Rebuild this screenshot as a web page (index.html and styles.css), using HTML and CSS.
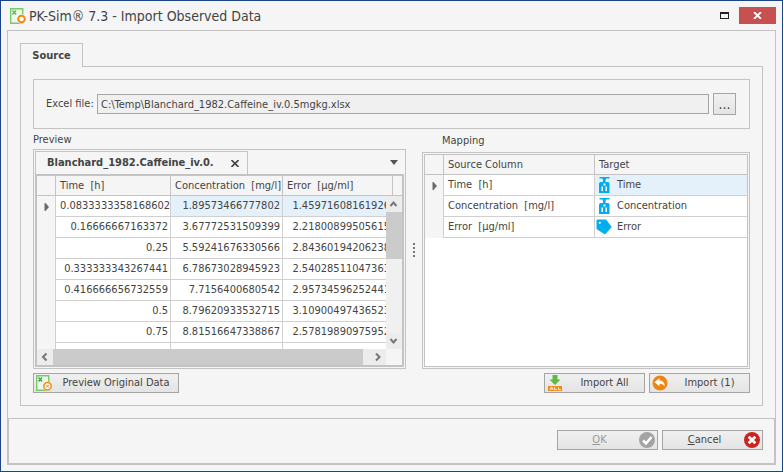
FILE: index.html
```
<!DOCTYPE html>
<html lang="en">
<head>
<meta charset="utf-8">
<title>PK-Sim® 7.3 - Import Observed Data</title>
<link rel="stylesheet" href="styles.css">
</head>
<body>
<svg class="defs" width="0" height="0" aria-hidden="true">
  <symbol id="bottle" viewBox="0 0 16 16">
    <path fill="#00adef" d="M3.500 0h10v1.500H10L9.500 3.500V5H12.500L13.500 6.500V16H3V6.500L4 5H7V3.500L6.500 1.500h-3z"/>
    <path fill="#fff" d="M7.500 6.500h2v2h-2zM5.500 9.500H7V14H5.500zM9.500 9.500H11V14H9.500z"/>
  </symbol>
  <symbol id="tag" viewBox="0 0 16 16">
    <path fill="#00adef" d="M1.500 .5H10L15.800 8 9 15.500 .5 10V1.500z"/>
    <circle cx="3.800" cy="3.800" r="1.100" fill="#fff"/>
  </symbol>
  <symbol id="row-arrow" viewBox="0 0 5 8"><path fill="#6a6a6a" d="M.5 0h1L5 4 1.500 8h-1z"/></symbol>
</svg>
<div class="window">
  <header class="titlebar">
    <svg class="app-icon" width="16" height="16" viewBox="0 0 16 16" aria-hidden="true">
      <path d="M.7.700h12v14.600H.7z" fill="#eef8ec" stroke="#7ac86c" stroke-width="1.400"/>
      <path d="M2.500 2.500l3.500 4M6 2.500L2.500 6.500" stroke="#5cb85a" stroke-width="1.400"/>
      <circle cx="11.500" cy="11" r="4.800" fill="#f5f5f5"/>
      <circle cx="11.500" cy="11" r="3.300" fill="#fff" stroke="#f58a0b" stroke-width="2"/>
    </svg>
    <h1>PK-Sim® 7.3 - Import Observed Data</h1>
    <button class="win-btn" type="button" aria-label="Maximize">
      <svg width="9" height="7" viewBox="0 0 9 7"><path fill="#222" fill-rule="evenodd" d="M0 0h9v7H0zM1 2v4h7V2z"/></svg>
    </button>
    <button class="win-btn close" type="button" aria-label="Close">
      <svg width="9" height="7" viewBox="0 0 9 7"><path d="M1 0l7 7M8 0L1 7" stroke="#fff" stroke-width="1.800"/></svg>
    </button>
  </header>

  <main class="client">
    <div class="source-tab">Source</div>
    <section class="page">
      <div class="file-group">
        <label for="file">Excel file:</label>
        <input id="file" type="text" readonly value="C:\Temp\Blanchard_1982.Caffeine_iv.0.5mgkg.xlsx">
        <button class="btn browse" type="button">...</button>
      </div>

      <div class="panes">
        <section class="pane preview">
          <h2>Preview</h2>
          <div class="frame">
            <div class="sheet-tabs">
              <div class="sheet-tab"><span>Blanchard_1982.Caffeine_iv.0.</span>
                <button class="plain" type="button" aria-label="Close sheet"><svg width="8" height="7" viewBox="0 0 8 7"><path d="M.5 0l7 7M7.500 0l-7 7" stroke="#444" stroke-width="1.600"/></svg></button>
              </div>
              <button class="plain drop" type="button" aria-label="Sheets"><svg width="8" height="5" viewBox="0 0 8 5"><path fill="#555" d="M0 0h8L4 5z"/></svg></button>
            </div>
            <div class="sheet">
              <div class="grid-view">
                <table class="grid">
                  <colgroup><col class="c-ind"><col class="c-time"><col class="c-conc"><col class="c-err"><col></colgroup>
                  <thead><tr><th></th><th>Time&nbsp; [h]</th><th>Concentration&nbsp; [mg/l]</th><th>Error&nbsp; [µg/ml]</th><th></th></tr></thead>
                  <tbody>
                    <tr class="focused"><td class="ind"><svg width="5" height="8"><use href="#row-arrow"/></svg></td><td class="current">0.0833333358168602</td><td>1.89573466777802</td><td>1.45971608161926</td><td></td></tr>
                    <tr><td class="ind"></td><td>0.16666667163372</td><td>3.67772531509399</td><td>2.21800899505615</td><td></td></tr>
                    <tr><td class="ind"></td><td>0.25</td><td>5.59241676330566</td><td>2.84360194206238</td><td></td></tr>
                    <tr><td class="ind"></td><td>0.333333343267441</td><td>6.78673028945923</td><td>2.54028511047363</td><td></td></tr>
                    <tr><td class="ind"></td><td>0.416666656732559</td><td>7.7156400680542</td><td>2.95734596252441</td><td></td></tr>
                    <tr><td class="ind"></td><td>0.5</td><td>8.79620933532715</td><td>3.10900497436523</td><td></td></tr>
                    <tr><td class="ind"></td><td>0.75</td><td>8.81516647338867</td><td>2.57819890975952</td><td></td></tr>
                    <tr><td class="ind"></td><td></td><td></td><td></td><td></td></tr>
                  </tbody>
                </table>
                <div class="vscroll">
                  <svg width="15" height="16"><path d="M4.500 10l3-3.500 3 3.500" fill="none" stroke="#777" stroke-width="2"/></svg>
                  <div class="thumb"></div>
                  <svg width="15" height="16"><path d="M4.500 6l3 3.500 3-3.500" fill="none" stroke="#777" stroke-width="2"/></svg>
                </div>
              </div>
              <div class="hscroll">
                <svg width="16" height="16"><path d="M9.500 4.500L6 8l3.500 3.500" fill="none" stroke="#777" stroke-width="2"/></svg>
                <div class="thumb"></div>
                <svg width="23" height="16"><path d="M13 4.500L16.500 8 13 11.500" fill="none" stroke="#777" stroke-width="2"/></svg>
              </div>
            </div>
          </div>
        </section>

        <div class="splitter"><i></i><i></i><i></i><i></i></div>

        <section class="pane mapping">
          <h2>Mapping</h2>
          <div class="frame">
            <div class="map-body">
              <table class="grid">
                <colgroup><col class="m-ind"><col class="m-src"><col></colgroup>
                <thead><tr><th></th><th>Source Column</th><th>Target</th></tr></thead>
                <tbody>
                  <tr><td class="ind"><svg width="5" height="8"><use href="#row-arrow"/></svg></td><td>Time&nbsp; [h]</td><td class="target selected"><div><svg width="16" height="16"><use href="#bottle"/></svg>Time</div></td></tr>
                  <tr><td class="ind"></td><td>Concentration&nbsp; [mg/l]</td><td class="target"><div><svg width="16" height="16"><use href="#bottle"/></svg>Concentration</div></td></tr>
                  <tr><td class="ind"></td><td>Error&nbsp; [µg/ml]</td><td class="target"><div><svg width="16" height="16"><use href="#tag"/></svg>Error</div></td></tr>
                </tbody>
              </table>
            </div>
          </div>
        </section>
      </div>

      <div class="actions">
        <button class="btn original" type="button">
          <svg width="16" height="16" viewBox="0 0 16 16" aria-hidden="true">
            <path d="M.7.700h12v14.600H.7z" fill="#eef8ec" stroke="#7ac86c" stroke-width="1.400"/>
            <path d="M2.500 2.500l3.500 4M6 2.500L2.500 6.500" stroke="#3fa447" stroke-width="1.400"/>
            <circle cx="11.500" cy="11.200" r="4.700" fill="#f0f0f0"/>
            <circle cx="11.500" cy="11.200" r="3.700" fill="#fff" stroke="#f58a0b" stroke-width="1.500"/>
            <path d="M10 9.700l3 3M13 9.700l-3 3" stroke="#f58a0b"/>
          </svg><span>Preview Original Data</span></button>
        <button class="btn wide push" type="button">
          <svg width="16" height="16" viewBox="0 0 16 16" aria-hidden="true">
            <path fill="#5fb946" d="M5.500 0h5v4.500h3L8 10 2.500 4.500h3z"/>
            <path fill="#f08a1c" d="M1 11h14v5H1z"/>
            <path fill="none" stroke="#fff" stroke-width=".8" d="M3 15l1.200-3h.6L6 15M3.500 14h2M7.500 12v2.600H10M11.500 12v2.600H14"/>
          </svg><span>Import All</span></button>
        <button class="btn wide" type="button">
          <svg width="16" height="16" viewBox="0 0 16 16" aria-hidden="true">
            <circle cx="8" cy="8" r="7.500" fill="#f08411"/>
            <path fill="#fff" d="M2.500 7.200L7.500 3v2.500c3.500 0 5.500 2.500 5 6-1-2-2.500-2.800-5-2.700v2.500z"/>
          </svg><span>Import (1)</span></button>
      </div>
    </section>
  </main>

  <footer class="footer">
    <button class="btn wide" type="button" disabled><span><u>O</u>K</span>
      <svg width="16" height="16" viewBox="0 0 16 16" aria-hidden="true"><circle cx="8" cy="8" r="8" fill="#a3a3a3"/><path d="M4 8.500l3 3 5.500-6.500" fill="none" stroke="#fff" stroke-width="2.500"/></svg></button>
    <button class="btn wide" type="button"><span><u>C</u>ancel</span>
      <svg width="16" height="16" viewBox="0 0 16 16" aria-hidden="true"><circle cx="8" cy="8" r="8" fill="#c9241f"/><path d="M4.700 4.700l6.600 6.600M11.300 4.700l-6.600 6.600" stroke="#fff" stroke-width="2.800"/></svg></button>
  </footer>
</div>
</body>
</html>
```
FILE: styles.css
```
* { box-sizing: border-box; }
body {
  margin: 0;
  color: #444;
  font: 11px/14px "DejaVu Sans Condensed", "DejaVu Sans", sans-serif;
}
svg { display: block; flex: none; }
.defs { position: absolute; }
h1, h2 { margin: 0; font-weight: normal; }
button, input { font: inherit; color: inherit; margin: 0; border-radius: 0; }

.window {
  display: flex;
  flex-direction: column;
  min-height: 100vh;
  padding: 0 6px 6px;
  border: 1px solid #1c4587;
  background: #f5f5f5;
}
.titlebar { display: flex; align-items: center; height: 29px; padding-left: 3px; }
.titlebar h1 { flex: 1; margin-left: 3px; font-size: 14px; line-height: 18px; }
.win-btn {
  display: flex;
  align-items: center;
  justify-content: center;
  width: 30px;
  height: 17px;
  padding: 0;
  border: 0;
  background: none;
}
.win-btn.close { width: 37px; background: #c75050; }

.client {
  flex: 1;
  display: flex;
  flex-direction: column;
  padding: 12px;
  border: 1px solid #c3c3c3;
  border-bottom: 0;
}
.source-tab {
  align-self: flex-start;
  width: 63px;
  height: 24px;
  margin-bottom: -1px;
  padding-top: 5px;
  border: 1px solid #c3c3c3;
  border-bottom: 0;
  background: #f5f5f5;
  font-weight: bold;
  text-align: center;
  z-index: 1;
}
.page {
  flex: 1;
  display: flex;
  flex-direction: column;
  padding: 12px;
  border: 1px solid #c3c3c3;
}
.file-group {
  display: flex;
  align-items: center;
  height: 50px;
  padding: 0 13px 0 12px;
  border: 1px solid #c3c3c3;
}
.file-group label { width: 51px; white-space: nowrap; }
.file-group input {
  flex: 1;
  min-width: 0;
  height: 20px;
  padding: 0 3px;
  border: 1px solid #a5a5a5;
  background: #f0f0f0;
  outline: 0;
}
.btn {
  display: flex;
  align-items: center;
  height: 20px;
  padding: 0 2px;
  border: 1px solid #a5a5a5;
  background: linear-gradient(#f0f0f0, #e4e4e4);
  white-space: nowrap;
}
.btn span { flex: 1; text-align: center; }
.btn svg + span { padding-left: 4px; }
.btn:disabled { color: #999; }
.browse { justify-content: center; width: 23px; height: 22px; margin-left: 4px; font-size: 14px; }

.panes { flex: 1; display: flex; }
.pane { display: flex; flex-direction: column; min-width: 0; }
.preview { flex: 373; }
.mapping { flex: 328; }
.pane h2 { height: 20px; padding-top: 4px; font-size: 11px; line-height: 14px; }
.mapping h2 { height: 23px; padding: 5px 0 0 20px; }
.frame {
  flex: 1;
  display: flex;
  flex-direction: column;
  padding: 1px;
  border: 1px solid #c3c3c3;
}
.sheet-tabs { display: flex; align-items: center; justify-content: space-between; height: 23px; }
.sheet-tab {
  display: flex;
  align-items: center;
  justify-content: space-between;
  width: 213px;
  height: 23px;
  padding: 0 8px 0 11px;
  border: 1px solid #c3c3c3;
  border-bottom: 0;
  font-weight: bold;
}
.plain { padding: 0; border: 0; background: none; }
.drop { margin-right: 6px; }
.sheet {
  flex: 1;
  display: flex;
  flex-direction: column;
  border: 2px solid #c3c3c3;
}
.grid-view {
  position: relative;
  height: 173px;
  overflow: hidden;
  background: #fff;
}
.grid { width: 100%; table-layout: fixed; border-collapse: separate; border-spacing: 0; }
.grid th {
  height: 20px;
  padding: 0 0 0 4px;
  border-right: 1px solid #c3c3c3;
  border-bottom: 1px solid #c3c3c3;
  background: #f5f5f5;
  font-weight: normal;
  text-align: left;
  white-space: nowrap;
}
.grid th:last-child { border-right: 0; }
.grid td {
  height: 21px;
  padding: 0 2px 0 4px;
  border-right: 1px solid #d0d0d0;
  border-bottom: 1px solid #d0d0d0;
  white-space: nowrap;
}
.preview td { text-align: right; }
.grid td.ind { border-bottom: 0; background: #f5f5f5; }
.ind svg { margin-left: auto; margin-right: 4px; }
.focused td:not(.ind):not(.current) { background: #e4f1fb; }
.c-ind { width: 19px; }
.c-time { width: 115px; }
.c-conc { width: 112px; }
.c-err { width: 110px; }
.vscroll {
  position: absolute;
  top: 20px;
  right: 0;
  bottom: 0;
  display: flex;
  flex-direction: column;
  width: 16px;
  background: #f0f0f0;
}
.vscroll svg, .hscroll svg { background: #ececec; }
.thumb { background: #cbcbcb; }
.vscroll .thumb { height: 47px; margin-bottom: auto; }
.hscroll { display: flex; height: 16px; padding-right: 16px; }
.hscroll .thumb { flex: 1; }

.splitter {
  display: flex;
  flex-direction: column;
  gap: 2px;
  width: 16px;
  padding: 114px 0 0 7px;
}
.splitter i { width: 2px; height: 2px; background: #777; }

.map-body { flex: 1; border: 1px solid #c3c3c3; background: #fff; }
.m-ind { width: 19px; }
.m-src { width: 151px; }
.mapping .grid td:last-child { border-right: 0; }
.target div { display: flex; align-items: center; gap: 5px; }
.target.selected { background: #e4f1fb; }
.mapping .grid td.target { padding-left: 1px; }

.actions { display: flex; gap: 4px; margin-top: 4px; }
.original { width: 146px; }
.wide { width: 101px; }
.push { margin-left: auto; }

.footer {
  display: flex;
  align-items: center;
  justify-content: flex-end;
  gap: 4px;
  height: 47px;
  padding: 0 11px 2px;
  border: 2px solid #c3c3c3;
  border-top-width: 1px;
}
```
